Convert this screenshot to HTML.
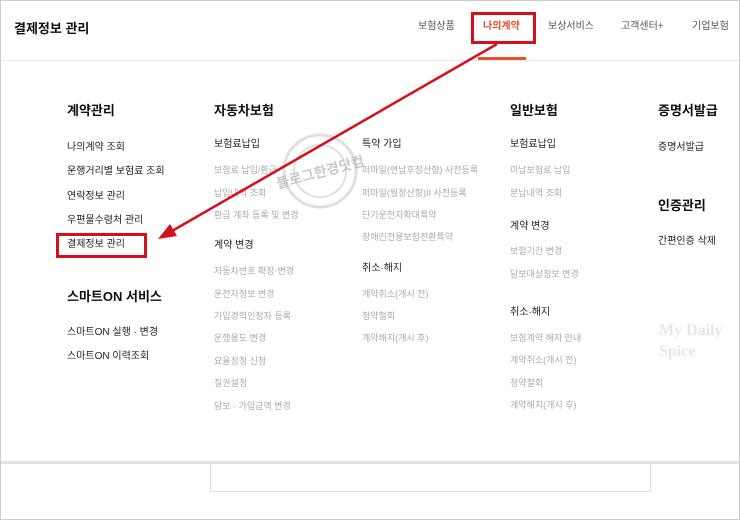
<!DOCTYPE html>
<html><head><meta charset="utf-8"><style>
*{margin:0;padding:0;box-sizing:border-box}
body{width:740px;height:520px;overflow:hidden;background:#fff;font-family:"Liberation Sans","Noto Sans CJK KR",sans-serif;position:relative}
.t{position:absolute;white-space:nowrap;line-height:1}
.h{font-size:13px;font-weight:bold;color:#111}
.s{font-size:10px;color:#222}
.g{font-size:9px;color:#aaa}
.n{font-size:10px;color:#555}
</style></head><body>
<div style="position:absolute;left:0;top:0;width:740px;height:520px;border:1px solid #ccc"></div>
<div style="position:absolute;left:1px;top:60px;width:738px;height:1px;background:#eee"></div>
<div class="t" style="left:14px;top:22px;font-size:13px;font-weight:bold;color:#111">결제정보 관리</div>
<div class="t n" style="left:418px;top:22px">보험상품</div>
<div class="t" style="left:483px;top:22px;font-size:10px;color:#e8502a;font-weight:bold">나의계약</div>
<div class="t n" style="left:548px;top:22px">보상서비스</div>
<div class="t n" style="left:621px;top:22px">고객센터+</div>
<div class="t n" style="left:692px;top:22px">기업보험</div>
<div style="position:absolute;left:478px;top:57px;width:48px;height:3px;background:#e8502a"></div>
<div style="position:absolute;left:471px;top:12px;width:65px;height:32px;border:3px solid #d50f1c"></div>

<div style="position:absolute;left:1px;top:461px;width:738px;height:3px;background:#e2e2e2"></div>
<div style="position:absolute;left:210px;top:464px;width:441px;height:28px;border:1px solid #ddd;border-top:none"></div>

<div class="t h" style="left:67px;top:104px">계약관리</div>
<div class="t s" style="left:67px;top:143px">나의계약 조회</div>
<div class="t s" style="left:67px;top:167px">운행거리별 보험료 조회</div>
<div class="t s" style="left:67px;top:192px">연락정보 관리</div>
<div class="t s" style="left:67px;top:216px">우편물수령처 관리</div>
<div class="t s" style="left:67px;top:240px">결제정보 관리</div>
<div style="position:absolute;left:56px;top:233px;width:91px;height:25px;border:3px solid #d50f1c"></div>
<div class="t h" style="left:67px;top:290px">스마트ON 서비스</div>
<div class="t s" style="left:67px;top:328px">스마트ON 실행 · 변경</div>
<div class="t s" style="left:67px;top:352px">스마트ON 이력조회</div>

<div class="t h" style="left:214px;top:104px">자동차보험</div>
<div class="t s" style="left:214px;top:140px">보험료납입</div>
<div class="t g" style="left:214px;top:166px">보험료 납입/환급</div>
<div class="t g" style="left:214px;top:189px">납입내역 조회</div>
<div class="t g" style="left:214px;top:211px">환급 계좌 등록 및 변경</div>
<div class="t s" style="left:214px;top:241px">계약 변경</div>
<div class="t g" style="left:214px;top:267px">자동차번호 확정·변경</div>
<div class="t g" style="left:214px;top:290px">운전자정보 변경</div>
<div class="t g" style="left:214px;top:312px">가입경력인정자 등록</div>
<div class="t g" style="left:214px;top:334px">운행용도 변경</div>
<div class="t g" style="left:214px;top:357px">요율정정 신청</div>
<div class="t g" style="left:214px;top:379px">질권설정</div>
<div class="t g" style="left:214px;top:402px">담보 · 가입금액 변경</div>

<div class="t s" style="left:362px;top:140px">특약 가입</div>
<div class="t g" style="left:362px;top:166px">퍼마일(연납후정산형) 사전등록</div>
<div class="t g" style="left:362px;top:189px">퍼마일(월정산형)II 사전등록</div>
<div class="t g" style="left:362px;top:211px">단기운전자확대특약</div>
<div class="t g" style="left:362px;top:233px">장애인전용보험전환특약</div>
<div class="t s" style="left:362px;top:264px">취소·해지</div>
<div class="t g" style="left:362px;top:290px">계약취소(개시 전)</div>
<div class="t g" style="left:362px;top:312px">청약철회</div>
<div class="t g" style="left:362px;top:334px">계약해지(개시 후)</div>

<div class="t h" style="left:510px;top:104px">일반보험</div>
<div class="t s" style="left:510px;top:140px">보험료납입</div>
<div class="t g" style="left:510px;top:166px">미납보험료 납입</div>
<div class="t g" style="left:510px;top:189px">분납내역 조회</div>
<div class="t s" style="left:510px;top:222px">계약 변경</div>
<div class="t g" style="left:510px;top:247px">보험기간 변경</div>
<div class="t g" style="left:510px;top:270px">담보대상정보 변경</div>
<div class="t s" style="left:510px;top:308px">취소·해지</div>
<div class="t g" style="left:510px;top:334px">보험계약 해지 안내</div>
<div class="t g" style="left:510px;top:356px">계약취소(개시 전)</div>
<div class="t g" style="left:510px;top:379px">청약철회</div>
<div class="t g" style="left:510px;top:401px">계약해지(개시 후)</div>

<div class="t h" style="left:658px;top:104px">증명서발급</div>
<div class="t s" style="left:658px;top:143px">증명서발급</div>
<div class="t h" style="left:658px;top:199px">인증관리</div>
<div class="t s" style="left:658px;top:237px">간편인증 삭제</div>
<div class="t" style="left:659px;top:320px;font-family:'Liberation Serif',serif;font-weight:bold;font-size:16px;color:#e4e7ee;line-height:21px;white-space:normal;width:80px">My Daily Spice</div>

<svg style="position:absolute;left:0;top:0" width="740" height="520">
<circle cx="320" cy="171" r="36" fill="none" stroke="#ccc" stroke-width="3" opacity=".6"/>
<circle cx="320" cy="171" r="26" fill="none" stroke="#ccc" stroke-width="2" opacity=".6"/>
<text x="320" y="177" text-anchor="middle" font-size="14" font-weight="bold" fill="#bbb" transform="rotate(-15 320 171)" font-family="Noto Sans CJK KR,sans-serif" opacity=".8">블로그한경닷컴</text>
<line x1="497" y1="44" x2="172" y2="231" stroke="#d50f1c" stroke-width="2.5"/>
<polygon points="158,239 170,224 177,236" fill="#d50f1c"/>
</svg>
</body></html>
